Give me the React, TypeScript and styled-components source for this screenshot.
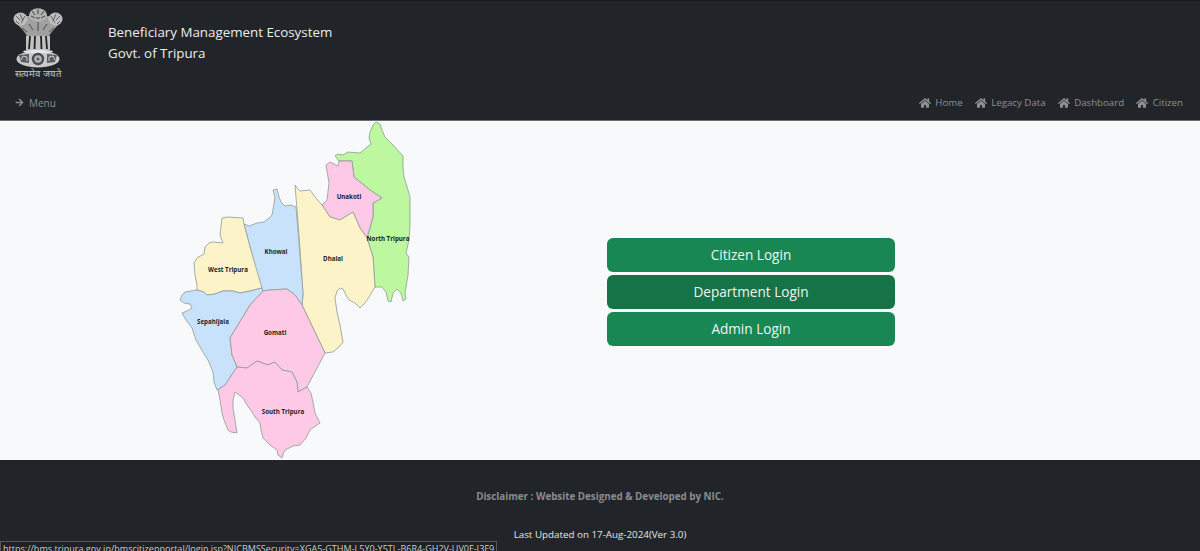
import React from "react";
import styled, { createGlobalStyle } from "styled-components";
import { FaHome, FaArrowRight } from "react-icons/fa";

const navLinks = ["Home", "Legacy Data", "Dashboard", "Citizen"];
const logins = ["Citizen Login", "Department Login", "Admin Login"];

const regions = [
  { name: "north", fill: "#bdf7a0", d: "M335 156 L338 154 L343 155 L348 152 L360 153 L366 148 L371 144 L369 138 L370 132 L373 125 L376 122 L380 124 L382 130 L385 137 L392 144 L403 156 L403 167 L404 177 L408 190 L410 197 L410 225 L409 240 L406 253 L409 257 L408 275 L405 293 L406 299 L403 301 L401 293 L397 289 L393 293 L391 302 L388 301 L386 292 L382 287 L375 287 L373 257 L367 238 L373 217 L373 203 L382 198 L370 190 L354 177 L352 161 L339 161 Z" },
  { name: "unakoti", fill: "#fdc9e6", d: "M326 165 L330 162 L338 166 L339 161 L352 161 L354 177 L370 190 L382 198 L373 203 L373 217 L367 238 L360 228 L353 212 L340 220 L330 217 L322 205 L327 200 L329 183 Z" },
  { name: "dhalai", fill: "#fdf3c8", d: "M295 185 L297 188 L300 191 L310 190 L316 198 L322 205 L330 217 L340 220 L353 212 L360 228 L367 238 L373 257 L375 287 L373 290 L369 297 L365 303 L360 308 L355 303 L349 300 L347 297 L343 289 L340 288 L337 291 L335 298 L337 312 L340 325 L343 342 L339 347 L333 352 L325 353 L302 305 L303 295 L300 250 L297 210 Z" },
  { name: "khowai", fill: "#c9e2fb", d: "M273 190 L277 189 L279 197 L281 202 L285 206 L291 205 L296 207 L298 230 L303 293 L302 305 L295 295 L287 289 L270 290 L263 291 L260 287 L250 247 L244 224 L249 226 L257 223 L264 222 L269 218 L272 215 L274 204 L275 197 Z" },
  { name: "west", fill: "#fdf3c8", d: "M222 218 L228 217 L243 218 L244 224 L250 247 L262 288 L250 291 L240 293 L233 291 L223 291 L215 294 L207 295 L204 292 L197 290 L197 285 L195 275 L194 263 L197 258 L204 254 L205 247 L209 243 L213 242 L223 243 L220 235 Z" },
  { name: "sepahijala", fill: "#c9e2fb", d: "M180 300 L182 295 L185 292 L191 291 L197 290 L204 292 L207 295 L215 294 L223 291 L233 291 L240 293 L250 291 L262 288 L263 291 L250 305 L230 338 L232 355 L237 367 L225 385 L217 390 L214 382 L213 372 L208 360 L203 352 L196 340 L192 328 L186 320 L182 313 L187 311 L192 308 L190 304 L184 303 Z" },
  { name: "gomati", fill: "#fdc9e6", d: "M263 291 L270 290 L287 289 L295 295 L302 305 L325 353 L317 368 L307 387 L298 392 L297 382 L292 372 L282 370 L275 362 L268 365 L257 361 L247 368 L237 367 L232 355 L230 338 L250 305 Z" },
  { name: "south", fill: "#fdc9e6", d: "M237 367 L247 368 L257 361 L268 365 L275 362 L282 370 L292 372 L297 382 L298 392 L307 387 L311 393 L313 402 L315 413 L320 423 L314 427 L310 430 L306 438 L300 445 L293 446 L285 450 L283 454 L282 458 L278 455 L277 450 L270 445 L263 438 L261 430 L260 423 L255 417 L252 412 L247 405 L243 398 L238 394 L235 392 L233 400 L233 408 L235 420 L237 433 L231 432 L228 430 L224 420 L222 413 L220 400 L218 390 L225 385 Z" },
];

const labels = [
  { text: "Unakoti", x: 349, y: 199 },
  { text: "North Tripura", x: 388, y: 241 },
  { text: "Khowai", x: 276, y: 254 },
  { text: "Dhalai", x: 333, y: 261 },
  { text: "West Tripura", x: 228, y: 272 },
  { text: "Sepahijala", x: 213, y: 324 },
  { text: "Gomati", x: 275, y: 335 },
  { text: "South Tripura", x: 283, y: 414 },
];

const GlobalStyle = createGlobalStyle`
  html, body {
    margin: 0;
    height: 551px;
    overflow: hidden;
    background: #212529;
    font-family: "Open Sans", "Noto Sans", sans-serif;
  }
`;

const Page = styled.div`
  position: relative;
  display: flex;
  flex-direction: column;
  height: 551px;
  overflow: hidden;
`;

const Header = styled.header`
  height: 121px;
  box-sizing: border-box;
  flex-shrink: 0;
  background: #212529;
  border-top: 1px solid #16181b;
  border-bottom: 1px solid #6c6e70;
`;

const Brand = styled.div`
  display: flex;
  align-items: center;
  height: 83px;
  padding-left: 13px;
`;

const Titles = styled.div`
  margin-left: 45px;
  margin-top: 1px;
  color: #eceded;
  font-size: 13.35px;
  line-height: 21px;
`;

const NavBar = styled.nav`
  display: flex;
  justify-content: space-between;
  align-items: center;
  height: 37px;
  padding: 0 17px 0 15px;
`;

const NavLinks = styled.div`
  display: flex;
  gap: 12px;
`;

const NavLink = styled.a`
  display: flex;
  align-items: center;
  gap: 4.5px;
  color: #8d8f91;
  font-size: 9.7px;
  white-space: nowrap;

  svg {
    font-size: 12px;
  }
`;

const MenuLink = styled(NavLink)`
  gap: 5px;
  font-size: 10px;

  svg {
    font-size: 9px;
  }
`;

const Main = styled.main`
  flex: 1;
  display: grid;
  grid-template-columns: 607px 288px;
  align-items: center;
  background: #f8f9fa;
`;

const MapFrame = styled.div`
  display: flex;
  padding-left: 170px;
`;

const MapSvg = styled.svg`
  display: block;
  width: 250px;
  height: 339px;
`;

const MapLabel = styled.text`
  font-family: "Open Sans", sans-serif;
  font-size: 6.2px;
  font-weight: 700;
  fill: #1c1c1c;
  text-anchor: middle;
`;

const LoginList = styled.div`
  display: flex;
  flex-direction: column;
  gap: 3px;
  margin-top: 2px;
`;

const LoginButton = styled.button<{ $active?: boolean }>`
  height: 34px;
  padding: 0;
  border: 0;
  border-radius: 6px;
  background: ${(p) => (p.$active ? "#157347" : "#198754")};
  color: #eef5f1;
  font-family: inherit;
  font-size: 13.6px;
`;

const Footer = styled.footer`
  height: 91px;
  flex-shrink: 0;
  box-sizing: border-box;
  padding-top: 29px;
  display: flex;
  flex-direction: column;
  align-items: center;
  gap: 23px;
  background: #212529;
`;

const Disclaimer = styled.div`
  color: #8a8c8e;
  font-size: 9.8px;
  font-weight: 700;
  line-height: 15px;
`;

const Updated = styled.div`
  color: #e6e6e6;
  font-size: 9.8px;
  line-height: 15px;
`;

const StatusBubble = styled.div`
  position: absolute;
  left: 0;
  top: 541px;
  width: 497px;
  height: 14px;
  box-sizing: border-box;
  padding: 1px 0 0 2px;
  overflow: hidden;
  background: #202124;
  border: 1px solid #55575a;
  color: #c9cacb;
  font-size: 9.05px;
  line-height: 12px;
  white-space: nowrap;
`;

const Emblem = () => (
  <svg width="50" height="72" viewBox="0 0 50 72" style={{ display: "block" }}>
    <defs>
      <filter id="soft" x="-5%" y="-5%" width="110%" height="110%">
        <feGaussianBlur stdDeviation="0.5" />
      </filter>
    </defs>
    <g filter="url(#soft)">
      {/* bodies */}
      <path d="M3 16 C8 21 11 24 14 29 L36 29 C39 24 42 21 47 16 L36 9 L14 9 Z" fill="#a0a0a0" />
      {/* side lions */}
      <ellipse cx="7.5" cy="12" rx="7" ry="6.5" fill="#bdbdbd" />
      <ellipse cx="42.5" cy="12" rx="7" ry="6.5" fill="#bdbdbd" />
      <path d="M3 9 L7 13 M7 7 L10 14 M12 9 L8 16 M3 14 L6 17" stroke="#55575a" strokeWidth="0.9" fill="none" />
      <path d="M47 9 L43 13 M43 7 L40 14 M38 9 L42 16 M47 14 L44 17" stroke="#55575a" strokeWidth="0.9" fill="none" />
      {/* centre lion */}
      <ellipse cx="25" cy="8" rx="9" ry="6.8" fill="#b2b2b2" />
      <path d="M19 4 L22 8 M25 2.5 L25 7 M31 4 L28 8 M18 9 L22 11 M32 9 L28 11 M23 11 L27 11" stroke="#3f4144" strokeWidth="1" fill="none" />
      <path d="M16 17 L20 23 M25 15 L25 24 M34 17 L30 23 M9 21 L14 25 M41 21 L36 25" stroke="#4a4c4f" strokeWidth="1" fill="none" />
      {/* legs */}
      <path d="M13 29 L13 43 L37 43 L37 29 Z" fill="#c2c2c2" />
      <path d="M17 29 L16 42 M22 29 L21.5 42 M28 29 L28.5 42 M33 29 L34 42" stroke="#1f2124" strokeWidth="1.8" fill="none" />
      {/* abacus with wheel */}
      <ellipse cx="25" cy="52" rx="21.5" ry="8.5" fill="#c9c9c9" />
      <ellipse cx="25" cy="44.5" rx="15" ry="1.8" fill="#e4e4e4" />
      <circle cx="25" cy="52" r="6.2" fill="#4a4c4f" />
      <circle cx="25" cy="52" r="3.8" fill="#b5b5b5" />
      <circle cx="25" cy="52" r="1.6" fill="#5e6063" />
      <path d="M6 48 L16 47 L16 56 L8 55 Z M44 48 L34 47 L34 56 L42 55 Z" fill="#5a5c5f" />
      <path d="M8 53 L10 49 L14 50 L14 54 M42 53 L40 49 L36 50 L36 54" stroke="#d0d0d0" strokeWidth="1" fill="none" />
    </g>
    <text x="25" y="70" textAnchor="middle" fontSize="9.6" fill="#c4c4c4" fontFamily="'Noto Sans CJK SC', sans-serif">सत्यमेव जयते</text>
  </svg>
);

const App = () => (
  <Page>
    <GlobalStyle />
    <Header>
      <Brand>
        <Emblem />
        <Titles>
          <div>Beneficiary Management Ecosystem</div>
          <div>Govt. of Tripura</div>
        </Titles>
      </Brand>
      <NavBar>
        <MenuLink>
          <FaArrowRight />
          Menu
        </MenuLink>
        <NavLinks>
          {navLinks.map((link) => (
            <NavLink key={link}>
              <FaHome />
              {link}
            </NavLink>
          ))}
        </NavLinks>
      </NavBar>
    </Header>
    <Main>
      <MapFrame>
        <MapSvg viewBox="170 121 250 339">
          <defs>
            <filter id="mapSoft" x="-2%" y="-2%" width="104%" height="104%">
              <feGaussianBlur stdDeviation="0.3" />
            </filter>
          </defs>
          <g filter="url(#mapSoft)">
            {regions.map((r) => (
              <path key={r.name} d={r.d} fill={r.fill} stroke="#8f9a94" strokeWidth="0.8" strokeLinejoin="round" />
            ))}
          </g>
          {labels.map((l) => (
            <MapLabel key={l.text} x={l.x} y={l.y}>
              {l.text}
            </MapLabel>
          ))}
        </MapSvg>
      </MapFrame>
      <LoginList>
        {logins.map((login, i) => (
          <LoginButton key={login} $active={i === 1}>
            {login}
          </LoginButton>
        ))}
      </LoginList>
    </Main>
    <Footer>
      <Disclaimer>Disclaimer : Website Designed &amp; Developed by NIC.</Disclaimer>
      <Updated>Last Updated on 17-Aug-2024(Ver 3.0)</Updated>
    </Footer>
    <StatusBubble>https://bms.tripura.gov.in/bmscitizenportal/login.jsp?NICBMSSecurity=XGA5-GTHM-L5Y0-Y5TL-B6R4-GH2V-UV0F-I3F9</StatusBubble>
  </Page>
);

export default App;
